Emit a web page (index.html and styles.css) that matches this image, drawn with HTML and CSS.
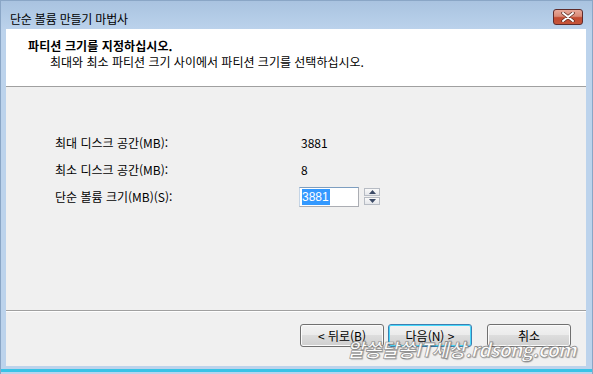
FILE: index.html
```html
<!DOCTYPE html>
<html lang="ko">
<head>
<meta charset="utf-8">
<link rel="stylesheet" href="styles.css">
</head>
<body>
<div class="window">
  <div class="titlebar">
    <span class="title">단순 볼륨 만들기 마법사</span>
    <div class="close">
      <svg width="14" height="10" viewBox="0 0 14 10"><path d="M2 1 L12 9 M12 1 L2 9" stroke="#5a2a20" stroke-width="3.4" stroke-linecap="round"/><path d="M2 1 L12 9 M12 1 L2 9" stroke="#ffffff" stroke-width="2" stroke-linecap="round"/></svg>
    </div>
  </div>
  <div class="client">
    <div class="header">
      <div class="h-title">파티션 크기를 지정하십시오.</div>
      <div class="h-sub">최대와 최소 파티션 크기 사이에서 파티션 크기를 선택하십시오.</div>
    </div>
    <div class="content">
      <div class="grid">
        <div class="label">최대 디스크 공간(MB):</div>
        <div class="value">3881</div>
        <div class="label">최소 디스크 공간(MB):</div>
        <div class="value">8</div>
        <div class="label">단순 볼륨 크기(MB)(S):</div>
        <div class="spin">
          <div class="input"><span class="sel">3881</span></div>
          <div class="arrows">
            <div class="arr"><svg width="7" height="4" viewBox="0 0 7 4"><path d="M0 4 L3.5 0 L7 4Z" fill="#3b4a66"/></svg></div>
            <div class="arr"><svg width="7" height="4" viewBox="0 0 7 4"><path d="M0 0 L3.5 4 L7 0Z" fill="#3b4a66"/></svg></div>
          </div>
        </div>
      </div>
    </div>
    <div class="footer">
      <button class="btn">&lt; 뒤로(B)</button>
      <button class="btn default">다음(N) &gt;</button>
      <button class="btn cancel">취소</button>
    </div>
    <div class="watermark">알쏭달쏭IT세상.rdsong.com</div>
  </div>
  <div class="bottomframe"></div>
</div>
</body>
</html>
```

FILE: styles.css
```css
html, body {
  margin: 0;
  padding: 0;
}
body {
  width: 593px;
  height: 374px;
  overflow: hidden;
  font-family: "Noto Sans CJK KR", "Liberation Sans", sans-serif;
  font-size: 12px;
  color: #000;
}
.window {
  width: 593px;
  height: 374px;
  background: linear-gradient(to bottom, #a9c3e0 0px, #bcd3ec 30px, #bcd3ec 100%);
  display: flex;
  flex-direction: column;
  box-sizing: border-box;
  border: 1px solid #8aa6c6;
  border-bottom: none;
}
.titlebar {
  height: 28px;
  display: flex;
  align-items: center;
  justify-content: space-between;
  padding: 0 9px 0 9px;
  flex: none;
}
.title {
  font-size: 12px;
  color: #000;
  margin-top: 6px;
  letter-spacing: -0.2px;
}
.close {
  width: 30px;
  height: 16px;
  margin-top: 4px;
  box-sizing: border-box;
  border: 1px solid #5e2b2b;
  border-radius: 3px;
  background: linear-gradient(to bottom, #e9a99a 0%, #d98b78 45%, #c24a30 55%, #c5553a 100%);
  display: flex;
  align-items: center;
  justify-content: center;
}
.client {
  position: relative;
  margin: 0 6px 0 5px;
  height: 337px;
  background: #f0f0f0;
  display: flex;
  flex-direction: column;
  flex: none;
}
.header {
  height: 57px;
  background: #fff;
  border-bottom: 1px solid #a0a0a0;
  box-sizing: content-box;
  padding: 0;
  flex: none;
}
.h-title {
  font-weight: bold;
  margin: 9px 0 0 22px;
  line-height: 16px;
  letter-spacing: 0.1px;
}
.h-sub {
  margin: 0 0 0 44px;
  line-height: 15px;
}
.content {
  flex: 1;
  padding: 42px 0 0 49px;
}
.grid {
  display: grid;
  grid-template-columns: 246px auto;
  grid-auto-rows: 27px;
  align-items: center;
}
.label, .value {
  line-height: 16px;
}
.spin {
  display: flex;
  align-items: center;
  margin-left: -2px;
}
.input {
  width: 60px;
  height: 20px;
  box-sizing: border-box;
  border: 1px solid #abadb3;
  border-top-color: #7d9ec0;
  border-left-color: #c5d5e6;
  background: #fff;
  padding: 1px 0 0 2px;
  font-family: "Liberation Sans", sans-serif;
  font-size: 12px;
  line-height: 16px;
}
.sel {
  background: #3399ff;
  color: #fff;
  display: inline-block;
  padding-right: 1px;
}
.arrows {
  margin-left: 5px;
  display: flex;
  flex-direction: column;
  gap: 1px;
}
.arr {
  width: 16px;
  height: 8px;
  box-sizing: border-box;
  border: 1px solid #b7bcc4;
  background: linear-gradient(to bottom, #fafafa, #e4e6ea);
  display: flex;
  align-items: center;
  justify-content: center;
}
.footer {
  height: 42px;
  border-top: 1px solid #a0a0a0;
  box-shadow: inset 0 1px 0 #fff;
  display: flex;
  align-items: flex-start;
  padding: 13px 0 0 294px;
  gap: 4px;
  flex: none;
}
.btn {
  width: 84px;
  height: 23px;
  box-sizing: border-box;
  border: 1px solid #707070;
  border-radius: 3px;
  background: linear-gradient(to bottom, #f2f2f2 0%, #ebebeb 50%, #dddddd 50%, #cfcfcf 100%);
  box-shadow: inset 0 0 0 1px #fbfbfb;
  font-family: "Noto Sans CJK KR", "Liberation Sans", sans-serif;
  font-size: 12px;
  color: #000;
  padding: 0;
  line-height: 18px;
}
.btn.default {
  border-color: #3c7fb1;
  box-shadow: inset 0 0 0 1px #48d8fb;
}
.btn.cancel {
  margin-left: 11px;
}
.watermark {
  position: absolute;
  left: 341px;
  top: 308px;
  font-family: "Noto Sans CJK KR", "DejaVu Sans", sans-serif;
  font-style: italic;
  font-weight: bold;
  font-size: 19px;
  line-height: 24px;
  letter-spacing: -0.6px;
  color: #ffffff;
  -webkit-text-stroke: 0.6px #7a7a7a;
  text-shadow: 1px 1px 1px rgba(0,0,0,0.35);
  opacity: 0.92;
  white-space: nowrap;
}
.bottomframe {
  flex: 1;
  background: linear-gradient(to bottom, #bcd3ec 0px, #bcd3ec 3px, #39c3e6 3px, #39c3e6 6px, #bcd3ec 6px);
}
```
